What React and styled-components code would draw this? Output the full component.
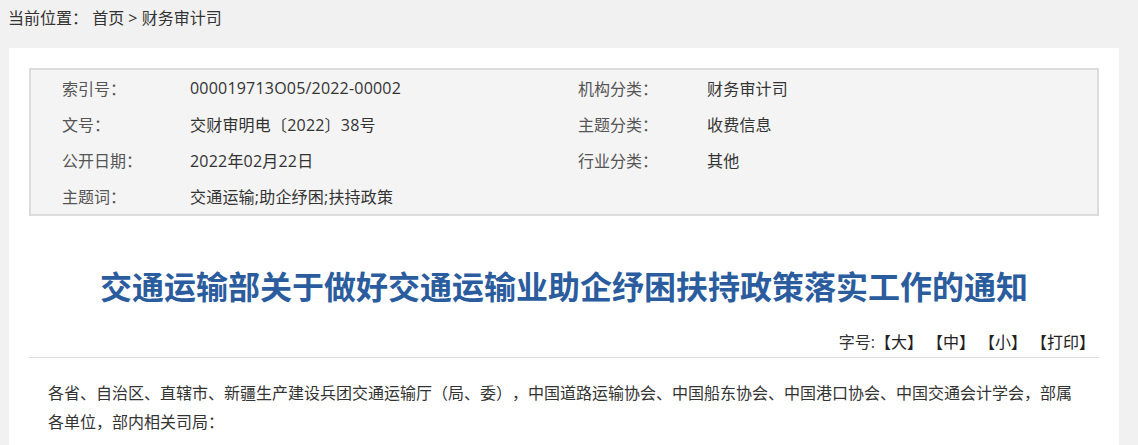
import React from "react"
import styled, { createGlobalStyle } from "styled-components"

const GlobalStyle = createGlobalStyle`
  body {
    margin: 0;
    background: #f1f1f1;
    font-family: "Open Sans", "Noto Sans CJK SC", sans-serif;
    color: #333;
    text-spacing-trim: space-all;
  }
`

const Page = styled.div`
  padding: 0 0 0 9px;
`

const Crumbs = styled.div`
  height: 48px;
  line-height: 36px;
  font-size: 16px;
  margin-left: -1px;
  color: #333;

  a {
    color: #333;
    text-decoration: none;
  }
`

const Card = styled.div`
  width: 1110px;
  box-sizing: border-box;
  background: #fff;
  padding: 20px 20px 30px;
  min-height: 420px;
`

const InfoBox = styled.div`
  display: grid;
  grid-template-columns: 516px 1fr;
  grid-auto-rows: 36px;
  padding-left: 31px;
  background: #f4f4f4;
  border: 2px solid #dcdcdc;
  font-size: 16px;
`

const InfoItem = styled.div`
  display: flex;
  align-items: center;
`

const Label = styled.span`
  width: ${(p) => p.$w || 128}px;
  flex-shrink: 0;
  color: #555;
`

const Value = styled.span`
  color: #333;
  letter-spacing: 0.2px;
`

const Title = styled.h1`
  margin: 49px 0 0;
  text-align: center;
  font-family: "Noto Sans CJK SC", sans-serif;
  font-size: 32px;
  line-height: 40px;
  font-weight: 700;
  color: #2b5d9e;
`

const Tools = styled.div`
  margin-top: 22px;
  height: 30px;
  line-height: 30px;
  text-align: right;
  padding-right: 4px;
  font-size: 16px;
  border-bottom: 1px solid #dddddd;
  color: #333;

  span {
    cursor: pointer;
    color: #222;
    margin-left: 4px;
  }

  span:first-child {
    margin-left: 0;
  }
`

const Body = styled.div`
  padding: 0 19px;
  margin-top: 21px;
  font-size: 16px;
  line-height: 29px;
  color: #333;

  p {
    margin: 0;
  }
`

const rows = [
  ["索引号：", "000019713O05/2022-00002", "机构分类：", "财务审计司"],
  ["文号：", "交财审明电〔2022〕38号", "主题分类：", "收费信息"],
  ["公开日期：", "2022年02月22日", "行业分类：", "其他"],
  ["主题词：", "交通运输;助企纾困;扶持政策", null, null],
]

function App() {
  return (
    <Page>
      <GlobalStyle />
      <Crumbs>
        当前位置： <a href="#">首页</a> &gt; <a href="#">财务审计司</a>
      </Crumbs>
      <Card>
        <InfoBox>
          {rows.map((r, i) => (
            <React.Fragment key={i}>
              <InfoItem>
                <Label>{r[0]}</Label>
                <Value>{r[1]}</Value>
              </InfoItem>
              <InfoItem>
                {r[2] && (
                  <>
                    <Label $w={129}>{r[2]}</Label>
                    <Value>{r[3]}</Value>
                  </>
                )}
              </InfoItem>
            </React.Fragment>
          ))}
        </InfoBox>

        <Title>交通运输部关于做好交通运输业助企纾困扶持政策落实工作的通知</Title>

        <Tools>
          字号:<span>【大】</span><span>【中】</span><span>【小】</span><span>【打印】</span>
        </Tools>

        <Body>
          <p>
            各省、自治区、直辖市、新疆生产建设兵团交通运输厅（局、委），中国道路运输协会、中国船东协会、中国港口协会、中国交通会计学会，部属各单位，部内相关司局：
          </p>
        </Body>
      </Card>
    </Page>
  )
}

export default App
